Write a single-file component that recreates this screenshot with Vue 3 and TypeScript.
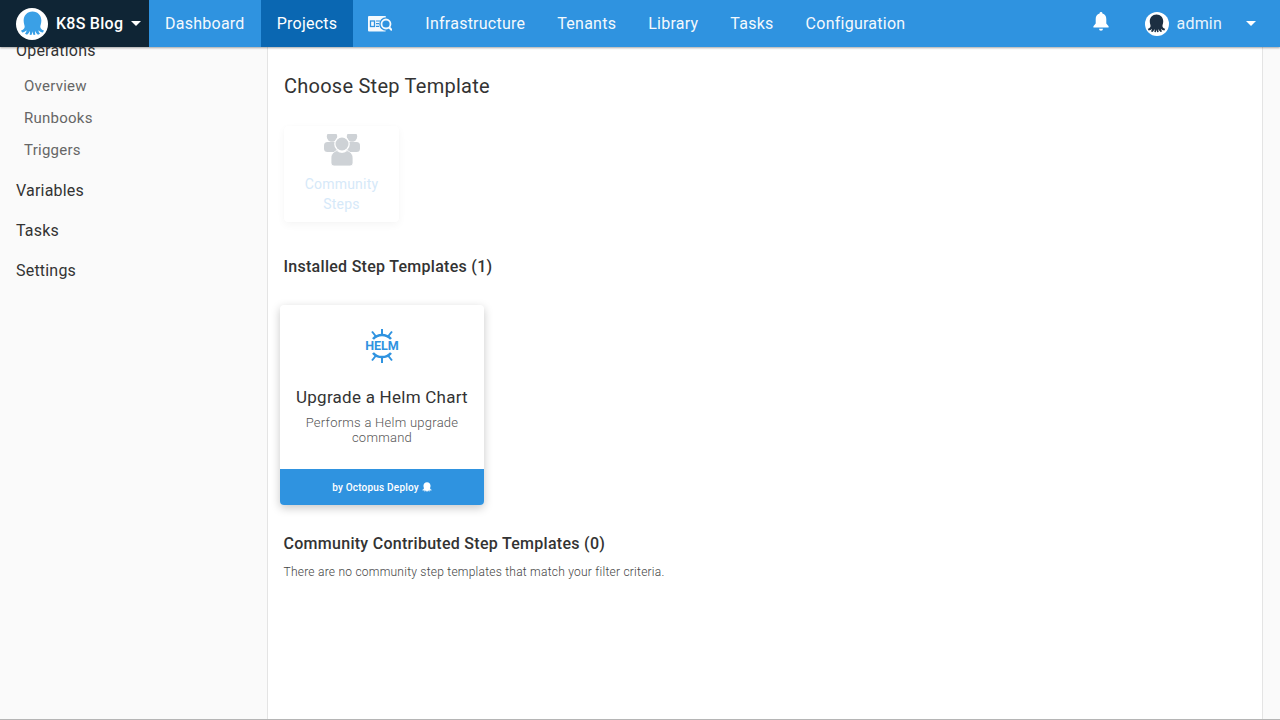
<script setup lang="ts">
const navItems: { label: string; active?: boolean; icon?: boolean }[] = [
  { label: 'Dashboard' },
  { label: 'Projects', active: true },
  { label: '', icon: true },
  { label: 'Infrastructure' },
  { label: 'Tenants' },
  { label: 'Library' },
  { label: 'Tasks' },
  { label: 'Configuration' },
]
const subItems = ['Overview', 'Runbooks', 'Triggers']
const mainItems = ['Variables', 'Tasks', 'Settings']
const octopus =
  'M12 .5C6.800 .5 3.500 4.500 3.500 9C3.500 11.800 4.500 13.500 4.500 15C4.500 16.500 3 18 1 18.700L2 20.700C3.800 20.500 5.200 19.700 6.300 18.500C6.200 20 5.500 21 4.800 21.800L6.700 22.800C8 21.900 9 20.500 9.500 19C9.700 20.200 9.600 21.400 9.300 22.800L11 23C11.500 22 11.800 21 12 19.500C12.200 21 12.500 22 13 23L14.700 22.800C14.400 21.400 14.300 20.200 14.500 19C15 20.500 16 21.900 17.300 22.800L19.200 21.800C18.500 21 17.800 20 17.700 18.500C18.800 19.700 20.200 20.500 22 20.700L23 18.700C21 18 19.500 16.500 19.500 15C19.500 13.500 20.500 11.800 20.500 9C20.500 4.500 17.200 .5 12 .5Z'
</script>

<template>
  <div class="app">
    <header class="nav">
      <div class="brand">
        <span class="avatar brand-avatar">
          <svg viewBox="0 0 24 24" width="25" height="25"><path :d="octopus" fill="#3aa0e6" /></svg>
        </span>
        <span class="brand-name">K8S Blog</span>
        <span class="caret brand-caret"></span>
      </div>
      <nav class="links">
        <a
          v-for="(item, i) in navItems"
          :key="i"
          class="link"
          :class="{ active: item.active, iconlink: item.icon }"
        >
          <svg v-if="item.icon" viewBox="0 0 24 16" width="24" height="16">
            <rect x="0" y="0" width="18" height="15.500" rx="1" fill="#fff" />
            <rect x="2.500" y="5" width="4" height="5.500" fill="none" stroke="#2f93e0" stroke-width="1.300" />
            <path d="M8 5h4M8 7.700h3M8 10.400h3" stroke="#2f93e0" stroke-width="1.200" />
            <circle cx="18" cy="8" r="6.800" fill="#2f93e0" />
            <circle cx="18" cy="8" r="4.500" fill="none" stroke="#fff" stroke-width="1.800" />
            <path d="M21 11.300l3 3" stroke="#fff" stroke-width="2.200" />
          </svg>
          <template v-else>{{ item.label }}</template>
        </a>
      </nav>
      <div class="right">
        <svg class="bell" viewBox="0 0 16 20" width="16" height="20">
          <path
            d="M8 0a1.400 1.400 0 0 0-1.400 1.500C4 2.200 2.700 4.300 2.700 7v4.500L.4 14.300v1.200h15.200v-1.200l-2.300-2.800V7c0-2.700-1.300-4.800-3.900-5.500A1.400 1.400 0 0 0 8 0zM6 16.700a2 2 0 0 0 4 0z"
            fill="#fff"
          />
        </svg>
        <span class="avatar user-avatar">
          <svg viewBox="0 0 24 24" width="19" height="19"><path :d="octopus" fill="#1c2f42" /></svg>
        </span>
        <span class="user-name">admin</span>
        <span class="caret user-caret"></span>
      </div>
    </header>

    <div class="page">
      <aside class="sidebar">
        <div class="side-main operations">Operations</div>
        <div v-for="s in subItems" :key="s" class="side-sub">{{ s }}</div>
        <div class="side-mains">
          <div v-for="m in mainItems" :key="m" class="side-main">{{ m }}</div>
        </div>
      </aside>

      <main class="content">
        <h1 class="title">Choose Step Template</h1>

        <div class="community-card">
          <svg class="people" viewBox="0 0 36 32" width="36" height="32">
            <circle cx="8" cy="2.500" r="5.200" fill="#ced2d6" />
            <circle cx="28" cy="2.500" r="5.200" fill="#ced2d6" />
            <rect x="0" y="8" width="14" height="10" rx="3.500" fill="#ced2d6" />
            <rect x="22" y="8" width="14" height="10" rx="3.500" fill="#ced2d6" />
            <circle cx="18" cy="10" r="7.800" fill="#fff" />
            <circle cx="18" cy="10" r="6.500" fill="#ced2d6" />
            <path
              d="M7 29v-5c0-4 3-6.500 6-7.500 1.300 1.300 3 2 5 2s3.700-.7 5-2c3 1 6 3.500 6 7.500v5a3 3 0 0 1-3 3H10a3 3 0 0 1-3-3z"
              fill="#ced2d6"
              stroke="#fff"
              stroke-width="0.800"
            />
          </svg>
          <div class="community-label">Community<br />Steps</div>
        </div>

        <h2 class="section first">Installed Step Templates (1)</h2>

        <div class="helm-card">
          <div class="helm-body">
            <div class="helm-logo">
              <svg class="helm-wheel" viewBox="0 0 32 36" width="32" height="36">
                <g fill="none" stroke="#2f93e0">
                  <path d="M7 11A12 12 0 0 1 25 11" stroke-width="2.600" />
                  <path d="M7 25A12 12 0 0 0 25 25" stroke-width="2.600" />
                  <path
                    d="M16 1v6M6 3.500l4 5M26 3.500l-4 5M16 35v-6M6 32.500l4-5M26 32.500l-4-5"
                    stroke-width="2"
                  />
                </g>
              </svg>
              <span class="helm-text">HELM</span>
            </div>
            <div class="helm-title">Upgrade a Helm Chart</div>
            <div class="helm-desc">Performs a Helm upgrade command</div>
          </div>
          <div class="helm-foot">
            by Octopus Deploy
            <svg class="foot-icon" viewBox="0 0 24 24" width="10" height="10"><path :d="octopus" fill="#fff" /></svg>
          </div>
        </div>

        <h2 class="section second">Community Contributed Step Templates (0)</h2>
        <p class="empty">There are no community step templates that match your filter criteria.</p>
      </main>

      <div class="gutter"></div>
    </div>
  </div>
</template>

<style>
html,
body {
  margin: 0;
  overflow: hidden;
}
</style>

<style scoped>
.app {
  width: 1280px;
  height: 720px;
  display: flex;
  flex-direction: column;
  overflow: hidden;
  font-family: Roboto, 'Liberation Sans', sans-serif;
  background: #fafafa;
  border-bottom: 1px solid #b5b5b5;
  box-sizing: border-box;
}
.nav {
  height: 47px;
  flex: none;
  display: flex;
  background: #2f93e0;
  box-shadow: 0 1px 2px rgba(0, 0, 0, 0.35);
  position: relative;
  z-index: 2;
  color: #fff;
}
.brand {
  width: 149px;
  flex: none;
  display: flex;
  align-items: center;
  background: #0f2535;
  box-sizing: border-box;
  padding-left: 16px;
}
.avatar {
  border-radius: 50%;
  background: #fff;
  display: flex;
  align-items: center;
  justify-content: center;
  flex: none;
}
.brand-avatar {
  width: 32px;
  height: 32px;
}
.brand-name {
  margin-left: 8px;
  font-size: 16px;
  font-weight: 500;
  letter-spacing: 0.25px;
}
.caret {
  width: 0;
  height: 0;
  border-left: 5px solid transparent;
  border-right: 5px solid transparent;
  border-top: 5px solid #fff;
}
.brand-caret {
  margin-left: 8px;
}
.links {
  display: flex;
  flex: 1;
}
.link {
  display: flex;
  align-items: center;
  padding: 0 16px;
  font-size: 16px;
  letter-spacing: 0.25px;
  color: #fff;
  opacity: 0.95;
}
.link.active {
  background: #0a67b2;
  opacity: 1;
}
.link.iconlink {
  padding: 0 17px 0 15px;
}
.right {
  display: flex;
  align-items: center;
  flex: none;
}
.bell {
  margin-right: 36px;
  margin-top: -4px;
}
.user-avatar {
  width: 24px;
  height: 24px;
}
.user-name {
  margin-left: 8px;
  font-size: 16px;
  letter-spacing: 0.2px;
  color: #e8f3fc;
}
.user-caret {
  margin-left: 24px;
  margin-right: 24px;
}
.page {
  flex: 1;
  display: flex;
  min-height: 0;
}
.sidebar {
  width: 267px;
  flex: none;
  box-sizing: border-box;
  background: #fafafa;
  overflow: hidden;
}
.side-main {
  height: 40px;
  line-height: 40px;
  padding-left: 16px;
  font-size: 16px;
  letter-spacing: 0.2px;
  color: #333;
}
.operations {
  margin-top: -16px;
  margin-bottom: -1px;
}
.side-mains {
  margin-top: 5px;
}
.side-sub {
  height: 32px;
  line-height: 32px;
  padding-left: 24px;
  font-size: 15px;
  letter-spacing: 0.25px;
  color: #666;
}
.content {
  width: 996px;
  flex: none;
  box-sizing: border-box;
  background: #fff;
  border-left: 1px solid #e4e4e4;
  border-right: 1px solid #e4e4e4;
  padding: 26px 15px 0 16px;
}
.gutter {
  flex: 1;
}
.title {
  margin: 0;
  font-size: 20px;
  line-height: 26px;
  font-weight: 400;
  letter-spacing: 0.25px;
  color: #333;
}
.community-card {
  width: 115px;
  height: 96px;
  margin-top: 27px;
  box-sizing: border-box;
  background: #fff;
  border-radius: 4px;
  box-shadow: 0 3px 8px rgba(0, 0, 0, 0.04), 0 0 2px rgba(0, 0, 0, 0.02);
  display: flex;
  flex-direction: column;
  align-items: center;
  overflow: hidden;
}
.people {
  flex: none;
  margin-top: 8px;
}
.community-label {
  margin-top: 8px;
  font-size: 14px;
  line-height: 20px;
  letter-spacing: 0.2px;
  color: #d6e9f9;
  text-align: center;
}
.section {
  margin: 0 0 0 -0.5px;
  font-size: 16px;
  font-weight: 500;
  line-height: 20px;
  letter-spacing: 0.28px;
  color: #333;
}
.section.first {
  margin-top: 35px;
}
.section.second {
  margin-top: 29px;
}
.helm-card {
  width: 204px;
  height: 200px;
  margin: 28px 0 0 -4px;
  border-radius: 4px;
  background: #fff;
  box-shadow: 0 3px 10px rgba(0, 0, 0, 0.22);
  display: flex;
  flex-direction: column;
  overflow: hidden;
}
.helm-body {
  flex: 1;
  text-align: center;
}
.helm-logo {
  height: 36px;
  width: 32px;
  margin: 23px auto 0;
  position: relative;
}
.helm-wheel {
  display: block;
}
.helm-text {
  position: absolute;
  left: -2px;
  right: -2px;
  top: 10px;
  line-height: 16px;
  font-size: 12.500px;
  font-weight: 700;
  color: #2f93e0;
  text-align: center;
}
.helm-title {
  margin-top: 21px;
  font-size: 17px;
  line-height: 24px;
  letter-spacing: 0.25px;
  color: #333;
}
.helm-desc {
  margin: 6px auto 0;
  width: 180px;
  font-size: 13px;
  line-height: 15px;
  font-weight: 300;
  letter-spacing: 0.26px;
  color: #555;
}
.helm-foot {
  height: 36px;
  flex: none;
  background: #2f93e0;
  color: #fff;
  font-size: 10px;
  font-weight: 500;
  letter-spacing: 0.2px;
  display: flex;
  align-items: center;
  justify-content: center;
  gap: 3px;
}
.foot-icon {
  flex: none;
}
.empty {
  margin: 10px 0 0 -0.5px;
  font-size: 12px;
  line-height: 16px;
  font-weight: 300;
  letter-spacing: 0.24px;
  color: #444;
}
</style>
